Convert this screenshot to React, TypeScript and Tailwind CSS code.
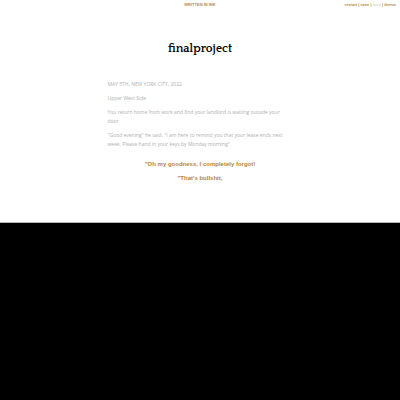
const link = "hover:underline";

export default function App() {
  return (
    <div className="flex min-h-screen flex-col bg-black font-['Open_Sans',sans-serif]">
      <div className="border-b border-[#b5b5b5] bg-white pb-[39px]">
        <header className="grid grid-cols-3 px-1 pt-0.5 font-['Liberation_Sans',sans-serif] text-[4px] leading-[6px] font-bold text-[#b98a4a]">
          <a href="#ink" className="col-start-2 justify-self-center">WRITTEN IN INK</a>
          <nav className="justify-self-end">
            <a href="#restart" className={link}>restart</a> | <a href="#save" className={link}>save</a> | <a href="#load" className="text-[#d8d8d8]">load</a> | <a href="#theme" className={link}>theme</a>
          </nav>
        </header>
        <main className="mx-auto w-full max-w-[185px]">
          <h1 className="mt-[33px] text-center font-['Quattrocento','Liberation_Serif',serif] text-[12px] leading-4 font-bold text-black">finalproject</h1>
          <div className="mt-[23px] flex flex-col gap-[5px] pr-2 text-[5px] leading-[9px] text-[#b0b0b0]">
            <p>MAY 5TH, NEW YORK CITY, 2022</p>
            <p>Upper West Side</p>
            <p>You return home from work and find your landlord is waiting outside your door</p>
            <p>"Good evening" he said. "I am here to remind you that your lease ends next week. Please hand in your keys by Monday morning"</p>
          </div>
          <div className="mt-[11px] flex flex-col items-center gap-[5px] font-['Liberation_Sans',sans-serif] text-[6px] leading-[9px] font-bold text-[#b98336]">
            <a href="#forgot">"Oh my goodness, I completely forgot!</a>
            <a href="#no">"That's bullshit,</a>
          </div>
        </main>
      </div>
    </div>
  );
}
